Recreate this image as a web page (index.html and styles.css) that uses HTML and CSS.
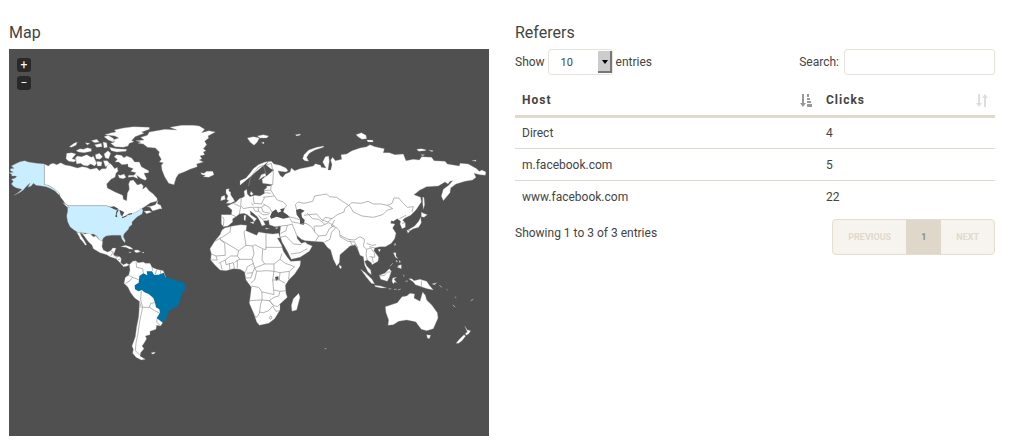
FILE: index.html
```html
<!DOCTYPE html>
<html lang="en">
<head>
    <meta charset="UTF-8">
    <meta name="viewport" content="width=device-width, initial-scale=1.0">
    <title>Link statistics</title>
    <link rel="stylesheet" href="styles.css">
</head>
<body>
    <div class="row">
        <section class="col">
            <h4>Map</h4>
            <div class="map">
                <svg class="world" viewBox="9 49 480 387" role="img" aria-label="Clicks by country">
                    <!-- North America -->
                    <g transform="translate(0 110) scale(.33333)">
                        <path class="land" d="M133 162L145 168 152 162 160 160 170 164 182 158 195 165 212 168 232 174 246 170 258 172 272 178 290 174 298 182 306 176 318 176 322 164 330 160 338 168 344 176 352 172 354 184 348 190 345 202 334 207 320 222 322 234 345 246 368 256 370 268 380 272 382 250 388 238 386 222 390 212 400 210 412 225 424 221 430 228 428 238 438 230 447 242 460 252 472 266 470 274 452 278 434 290 428 294 418 302 398 312 385 312 370 322 366 318 372 306 358 300 345 297 330 290 320 287 205 287 196 282 190 272 182 262 176 250 160 235 145 226 133 224Z"/>
                        <path class="low" d="M27 188L40 187 30 181 32 176 42 175 34 168 50 160 60 155 74 152 85 156 110 160 133 162 133 224 145 226 158 234 168 240 180 252 176 254 165 243 150 235 138 230 125 228 108 226 100 220 94 228 84 232 90 219 78 230 70 240 58 248 42 256 54 248 66 238 50 234 42 230 34 222 40 214 34 208 46 204 50 198 36 198 34 192Z"/>
                        <path class="low" d="M203 287L320 287 332 292 345 297 358 300 366 318 372 321 385 314 400 310 412 304 425 294 429 302 426 312 412 320 404 328 396 336 396 344 388 350 385 358 372 372 370 380 376 392 374 398 366 388 362 376 350 376 335 376 318 378 310 384 306 394 298 390 290 378 280 372 268 374 256 369 235 368 222 360 210 350 203 335 200 318 203 303Z"/>
                        <path class="land" d="M188 278L200 284 208 293 200 290ZM440 290L450 292 458 303 480 296 486 297 482 286 472 281 474 270 466 284 456 288ZM432 304L448 302 455 306 440 311Z"/>
                        <path class="land" d="M314 74L335 68 348 66 343 60 370 54 400 50 448 52 448 58 425 66 432 70 405 80 395 92 402 95 388 100 384 108 370 112 345 110 332 100 344 96 338 90 356 84 345 78ZM312 80L324 76 338 84 345 90 340 96 325 90ZM328 112L350 116 380 118 378 124 350 126 334 122Z"/>
                        <path class="land" d="M342 140L350 134 364 136 372 143 380 138 395 144 404 156 418 156 424 170 446 182 446 188 432 190 440 206 436 211 424 206 410 196 414 206 400 200 384 202 386 196 402 196 408 188 392 184 400 176 384 170 384 162 366 164 356 156 345 156 352 148ZM354 194L362 196 372 192 378 202 370 206 358 204Z"/>
                        <path class="land" d="M226 144L232 138 245 140 260 134 274 142 280 138 290 160 284 168 272 162 262 168 250 166 242 160 230 162ZM200 130L215 128 228 132 216 146 230 150 222 156 206 154 198 146ZM208 110L222 100 232 96 228 106 214 112ZM228 122L240 116 250 118 262 113 274 116 274 124 252 128 236 126ZM286 134L298 130 308 140 300 148 288 146ZM290 154L306 156 304 168 292 168ZM312 132L324 122 332 130 326 146 316 144ZM274 92L290 88 298 96 284 98ZM284 104L304 100 306 110 290 112ZM309 96L320 98 322 112 312 114ZM256 98L270 100 262 105ZM310 152L322 152 330 162 316 170Z"/>
                        <path class="lake" d="M330 291L342 289 356 297 348 300 340 296ZM350 301L356 300 350 312 352 322 346 320ZM360 301L372 308 366 318 362 314ZM366 322L382 316 378 320 366 325ZM384 312L396 309 396 312 386 315Z"/>
                    </g>
                    <!-- Greenland and Iceland -->
                    <g transform="translate(110 110) scale(.33333)">
                        <path class="land" d="M78 92L92 96 84 100 100 102 112 112 136 114 148 126 146 134 154 148 148 156 160 158 154 166 156 180 164 200 176 220 192 224 198 204 206 192 222 186 240 178 262 170 260 162 280 156 268 150 276 146 270 138 284 134 280 126 288 122 280 116 290 104 284 94 296 84 294 78 316 66 296 62 275 68 284 58 268 48 250 46 215 46 180 52 200 60 165 58 140 62 118 66 112 76 92 82 102 90Z"/>
                        <path class="land" d="M272 188L282 190 290 184 308 184 312 194 296 202 280 200 286 196 276 194Z"/>
                    </g>
                    <!-- Central and South America -->
                    <g transform="translate(60 220) scale(.33333)">
                        <path class="land" d="M60 36L75 42 88 40 100 50 108 48 116 58 128 64 126 80 130 90 142 96 152 92 158 84 168 84 164 96 160 102 164 108 180 110 184 116 182 128 190 134 200 130 208 134 200 139 190 140 178 126 168 116 150 110 140 104 120 98 100 86 96 76 84 64 74 50 68 42ZM50 37L60 38 64 48 72 60 80 74 76 76 66 62 60 56 58 50Z"/>
                        <path class="land" d="M182 80L196 76 210 80 220 88 208 87 198 82ZM224 90L234 90 242 95 230 98 224 96ZM206 96L214 97 210 99ZM247 97L252 97 252 99 247 99ZM274 398L286 396 282 402 276 402Z"/>
                        <path class="land" d="M208 134L218 124 228 122 234 128 250 126 256 130 270 130 276 142 290 148 310 152 316 168 320 240 308 308 302 318 290 316 288 328 270 334 270 344 256 348 260 356 252 370 246 378 252 386 242 398 240 408 246 412 256 418 244 420 228 412 218 400 220 388 216 378 226 350 230 320 236 290 238 260 238 244 224 234 212 218 204 202 192 190 196 172 206 166 210 150Z"/>
                        <path class="border" d="M228 124L230 142 248 146 250 160M276 142L278 152M290 150L286 162M302 152L302 162M206 166L218 172 238 180M196 190L208 184 218 172M244 212L242 240 248 262 268 262 272 250 286 248M268 262L284 272 300 280M248 262L244 280 238 310 234 340 228 370 226 392 238 404M238 244L244 264M292 294L290 306 302 318M152 92L160 96 152 108M164 108L174 108 168 116M182 116L174 120M190 134L186 138"/>
                        <path class="high" d="M238 168L250 160 262 166 260 154 276 154 282 164 296 164 312 158 316 172 335 176 350 182 368 186 378 198 376 208 366 220 362 234 360 248 350 262 330 270 322 284 318 296 308 308 290 294 300 278 298 268 288 262 285 248 280 234 266 222 252 216 246 210 235 214 225 208 224 196 236 188Z"/>
                    </g>
                    <!-- Europe and Asia -->
                    <g transform="translate(200 120) scale(.33333)">
                        <path class="land" d="M120 196L120 182 138 174 150 160 160 146 175 134 195 126 214 124 222 132 240 136 258 144 264 152 258 156 240 154 234 152 240 166 248 172 256 162 270 156 274 144 284 152 300 146 322 142 340 138 346 131 362 136 364 142 378 144 368 126 376 110 386 108 388 124 384 150 392 150 396 134 392 120 398 112 406 122 425 118 423 104 440 102 456 92 480 84 500 80 510 74 525 80 553 86 550 98 568 98 585 104 610 102 618 122 640 118 658 120 665 110 695 112 702 122 735 124 742 132 778 138 780 130 805 132 830 146 838 154 846 150 858 156 856 166 840 164 822 160 828 172 818 180 795 184 768 192 752 204 750 218 730 242 724 228 730 208 746 196 758 182 750 184 744 192 735 186 715 198 680 200 660 210 642 224 662 232 664 246 648 270 632 286 615 294 608 300 616 310 616 322 606 326 600 312 602 304 592 296 580 304 574 302 572 310 585 312 578 324 588 340 584 356 574 370 556 380 540 380 524 384 522 392 536 412 534 424 516 434 514 428 502 420 494 424 500 438 512 450 514 464 504 456 494 436 490 410 480 406 472 384 465 374 450 378 434 392 420 404 418 428 410 438 400 418 392 390 382 382 370 366 340 364 316 362 304 358 290 346 292 356 304 370 316 366 322 372 337 378 328 394 300 412 274 418 262 394 246 366 240 348 240 336 242 318 225 320 208 314 206 300 200 302 190 302 196 314 186 318 180 304 172 290 160 280 150 272 152 284 170 296 162 306 158 298 142 284 132 280 118 282 108 290 98 296 98 306 84 318 70 320 64 312 64 284 94 284 96 270 82 258 94 252 108 246 118 236 130 232 134 228 132 214 140 208 142 222 150 230 165 226 180 228 194 220 192 210 200 204 200 198 210 198 218 194 204 192 188 190 186 178 198 168 196 160 184 164 176 180 190 170 200 168 214 156 222 150 212 146 198 134 206 124 206Z"/>
                        <path class="land" d="M308 116L312 104 326 90 350 82 372 78 370 82 345 90 328 100 320 112 326 124 314 122ZM142 54L160 50 178 54 172 66 162 76 150 66ZM172 48L190 44 206 48 200 54 180 54ZM184 68L192 66 192 72ZM286 44L302 42 300 46 290 48ZM468 44L484 38 498 46 500 56 486 58 476 52ZM500 60L518 60 520 66 504 66ZM650 88L664 86 678 89 676 92 656 94ZM686 90L700 92 696 95ZM662 104L674 104 668 107ZM816 122L828 120 828 124Z"/>
                        <path class="land" d="M668 232L672 232 674 254 670 268 668 250ZM664 276L670 280 682 284 672 292 664 290ZM662 292L664 308 656 322 640 326 630 332 624 330 644 318 656 304ZM620 330L630 332 624 340ZM584 370L588 372 584 378ZM534 388L542 388 538 396ZM418 434L425 440 422 447 418 442Z"/>
                        <path class="land" d="M78 208L88 206 86 213 92 216 92 224 100 236 104 244 92 250 78 250 86 242 80 238 84 228 78 220ZM64 230L74 226 76 238 62 242ZM132 286L138 286 136 302 132 300ZM150 306L162 306 160 312ZM196 324L208 326 198 328ZM226 324L234 322 230 327ZM153 214L160 222 154 226 150 222Z"/>
                        <path class="lake" d="M210 290L216 276 228 268 234 278 244 274 240 268 254 264 250 276 262 284 270 292 250 296 230 290 214 296ZM288 270L300 266 314 272 304 280 306 292 314 300 312 314 300 312 300 298 290 284Z"/>
                        <path class="border" d="M146 198L150 176 162 158 176 142 190 136 198 160M198 136L214 130 220 160 218 194M214 194L212 210 222 226 232 240 250 246 260 256 252 266M192 212L212 210M196 218L212 220 M188 232L222 228M160 230L162 250 184 252 194 232M124 236L122 256 130 266M100 250L122 260 118 282M130 266L150 262 164 262M154 248L160 256M164 262L184 262 194 256M184 262L190 276 210 280M190 252L208 262 216 276M174 262L176 274 188 284 206 284M160 264L166 274 176 274M176 286L186 298 202 294M68 290L72 298 70 318M94 284L108 290M264 290L284 294 300 300M270 296L276 306 300 310M242 318L262 316 278 312M262 316L258 332 242 340M276 312L284 330 290 346M300 312L318 310 334 320 344 334"/>
                        <path class="border" d="M290 270L286 254 294 246 312 250 338 244 344 228 368 224 380 222 388 230 410 232 424 242 446 256 456 248 484 250 504 244 520 252 544 252 562 256 576 250 582 234 596 234 608 248 622 262 640 260 636 276M448 256L460 276 486 288 520 292 548 284 562 270 578 266 562 256M446 256L434 266 432 276 412 284 396 296M322 280L338 296 356 298 374 312M312 286L326 284 350 282 366 300 384 306 396 296M396 296L376 292 368 300M344 318L364 318 386 308 404 318M342 318L344 336 356 348 346 364M356 348L378 346 388 326 400 318M374 366L390 358 394 338 408 322 M404 300L394 318 408 322 418 332 420 346 444 358 464 360 480 350 494 358M420 346L420 350 444 364 462 366M450 362L458 378 466 374M462 364L474 384M494 358L490 378 500 388 498 404 502 420M500 388L512 384 524 400 524 412 508 410M508 380L524 384M516 410L520 428M598 296L618 286M606 310L616 308M240 352L258 348 280 372 304 374M272 402L300 398 322 386M500 370L516 376 528 374"/>
                    </g>
                    <!-- Africa -->
                    <g transform="translate(200 210) scale(.33333)">
                        <path class="land" d="M74 54L98 48 122 44 140 46 138 62 152 68 170 76 176 66 198 70 218 72 236 70 240 84 232 84 244 104 250 124 262 142 272 154 302 152 300 168 284 192 266 210 256 226 258 250 262 262 240 282 240 300 224 326 206 340 178 346 170 336 162 312 148 280 152 250 154 232 138 210 134 186 120 178 100 176 78 182 60 180 44 164 32 150 34 132 30 116 44 94 60 74 66 60ZM296 250L300 262 290 300 276 304 274 286 280 266Z"/>
                        <path class="lake" d="M225 201L235 199 236 208 228 212Z"/>
                        <path class="border" d="M92 50L90 66 66 82 44 94M60 82L60 88 116 122 138 106 160 108 164 104 192 118 198 118 198 72M198 112L246 112M138 106L132 66 136 60M60 88L74 100 76 136 48 138 34 132M48 138L52 150 34 150M116 122L112 138 92 138 76 150 56 160M76 150L78 164 100 158 104 178M88 160L90 180M104 158L110 152 120 148 M112 138L120 148 156 148 162 132 158 108M112 150L112 176M156 148L160 160 142 170 136 188M188 118L186 150 194 162 222 162 240 148 246 130M160 160L164 174 194 162M164 174L158 188 140 190M164 174L170 184 200 182 222 184 240 188 268 184 284 170 256 160 240 148M222 162L222 184M240 188L238 210 256 220M268 184L266 208M170 184L164 210 152 220M138 204L152 204 158 188M154 228L176 232 186 246 206 250 222 254 220 230 218 210 222 184M218 210L238 210M222 240L240 244 258 242M186 246L186 270 148 272M186 270L208 272 222 262 236 258 240 244M208 272L220 286 232 290 240 282M186 270L182 282 178 310 170 322 164 318M178 306L190 308 206 302 218 288M220 286L208 272M218 288L228 304 238 302M208 322L213 318 216 324 210 328ZM62 160L66 178"/>
                    </g>
                    <!-- South-east Asia and Oceania -->
                    <g transform="translate(310 200) scale(.33333)">
                        <path class="land" d="M226 320L244 314 262 308 276 290 290 288 300 280 314 282 312 294 330 304 338 276 346 286 350 300 366 316 382 338 384 354 370 386 350 392 334 388 322 372 318 366 310 364 290 360 266 364 250 374 234 376 236 360 228 338ZM350 404L362 406 358 416 352 414ZM464 378L472 390 482 392 476 402 468 406 466 400 472 396ZM462 404L467 408 456 422 446 430 438 430 448 418Z"/>
                        <path class="land" d="M296 236L306 236 312 242 330 238 350 244 358 256 370 270 352 266 338 262 328 258 316 254 310 246ZM208 226L224 220 238 206 244 214 238 232 232 244 212 238ZM152 208L166 218 186 238 194 252 184 250 168 230ZM194 256L212 258 230 264 214 264 196 260ZM248 234L260 232 252 238 260 248 254 246 250 252 246 244ZM250 158L258 158 258 168 264 176 256 172ZM258 180L263 184 260 187ZM268 180L272 186 268 188ZM266 196L274 194 274 206 262 202ZM366 252L380 248 374 254Z"/>
                        <path class="isle" d="M240 199L248 190M236 266L244 267M252 268L260 268M264 270L272 267M281 224L282 230M286 244L294 243M388 256L396 262M410 268L413 270M428 315L436 321M482 302L490 298M436 290L438 294M44 446L49 446"/>
                        <path class="border" d="M334 242L334 262M210 228L224 226 232 216 242 216"/>
                    </g>
                </svg>
                <div class="zoom">
                    <button type="button" aria-label="Zoom in">+</button>
                    <button type="button" aria-label="Zoom out">−</button>
                </div>
            </div>
        </section>

        <section class="col">
            <h4>Referers</h4>
            <div class="toolbar">
                <div class="length">
                    <label for="length">Show</label>
                    <span class="select">
                        <select id="length">
                            <option>10</option>
                            <option>25</option>
                            <option>50</option>
                            <option>100</option>
                        </select>
                    </span>
                    <label for="length">entries</label>
                </div>
                <div class="filter">
                    <label for="search">Search:</label>
                    <input type="search" id="search">
                </div>
            </div>
            <table>
                <thead>
                    <tr>
                        <th class="host">
                            <div class="head">Host
                                <svg class="sort active" width="12" height="13" viewBox="0 0 12 13"><path d="M2 0h2v9h2l-3 4-3-4h2zM7 0h2v3H7zM7 4h3v2H7zM7 7h4v2H7zM7 10h5v3H7z"/></svg>
                            </div>
                        </th>
                        <th>
                            <div class="head">Clicks
                                <svg class="sort" width="12" height="13" viewBox="0 0 12 13"><path d="M2 0h2v9h2l-3 4-3-4h2zM8 13h2V4h2L9 0 6 4h2z"/></svg>
                            </div>
                        </th>
                    </tr>
                </thead>
                <tbody>
                    <tr><td>Direct</td><td>4</td></tr>
                    <tr><td>m.facebook.com</td><td>5</td></tr>
                    <tr><td>www.facebook.com</td><td>22</td></tr>
                </tbody>
            </table>
            <div class="bottom">
                <div>Showing 1 to 3 of 3 entries</div>
                <div class="pagination">
                    <button type="button" disabled>PREVIOUS</button>
                    <button type="button" class="current">1</button>
                    <button type="button" disabled>NEXT</button>
                </div>
            </div>
        </section>
    </div>
</body>
</html>
```
FILE: styles.css
```css
* { box-sizing: border-box; }
body { margin: 0; background: #fff; color: #444; font-family: Roboto, sans-serif; font-size: 12px; line-height: 20px; }
.row { display: grid; grid-template-columns: 1fr 1fr; gap: 26px; padding: 21px 29px 10px 9px; }
h4 { margin: 0 0 4px; font-size: 16px; line-height: 24px; font-weight: 400; }

.map { position: relative; background: #505050; }
.world { display: block; width: 100%; }
.land, .low { fill: #fff; stroke: #999; stroke-width: 1; }
.low { fill: #c8eeff; }
.high { fill: #0071a4; }
.lake { fill: #505050; }
.border { fill: none; stroke: #909090; stroke-width: 2; }
.isle { fill: none; stroke: #ccc; stroke-width: 2; }
.zoom { position: absolute; top: 9px; left: 8px; display: grid; gap: 4px; }
.zoom button { width: 14px; height: 14px; padding: 0; border: 0; border-radius: 3px; background: #292929; color: #fff; font: 12px/14px Roboto, sans-serif; }

.toolbar, .length, .filter, .bottom, .head { display: flex; align-items: center; }
.toolbar, .bottom, .head { justify-content: space-between; }
.length { gap: 3px; }
.filter { gap: 5px; }
.select { position: relative; display: block; }
.select::before { content: ""; position: absolute; top: 2px; right: 1px; bottom: 2px; width: 12px; background: #ccc; border: solid #777; border-width: 0 2px 2px 0; }
.select::after { content: ""; position: absolute; top: 11px; right: 5px; border: solid transparent; border-width: 4px 3px 0; border-top-color: #000; }
select, input { height: 26px; border: 1px solid #e8e2da; border-radius: 3px; background: #fff; color: #444; font: 11px Roboto, sans-serif; }
select { display: block; width: 65px; padding: 0 12px; appearance: none; }
input { width: 151px; padding: 0 8px; }

table { width: 100%; margin-top: 7px; border-collapse: collapse; table-layout: fixed; }
th, td { padding: 5px 7px; text-align: left; }
th { padding-top: 8px; border-bottom: 3px solid #e0d9cc; letter-spacing: 1px; }
td { height: 32px; border-bottom: 1px solid #ddd8cc; }
tbody tr:last-child td { border-bottom: 0; }
.host { width: 304px; }
.sort { fill: #ddd; }
.sort.active { fill: #999; }

.bottom { align-items: flex-start; margin-top: 6px; }
.bottom > div:first-child { padding-top: 4px; }
.pagination { display: flex; overflow: hidden; border: 1px solid #e5ddcf; border-radius: 4px; background: #f7f4ef; }
.pagination button { height: 34px; padding: 0 15px; border: 0; background: none; color: #e0d9cc; font: 700 9px Roboto, sans-serif; }
.pagination .current { background: #dfd7ca; color: #8e8c84; }
```
